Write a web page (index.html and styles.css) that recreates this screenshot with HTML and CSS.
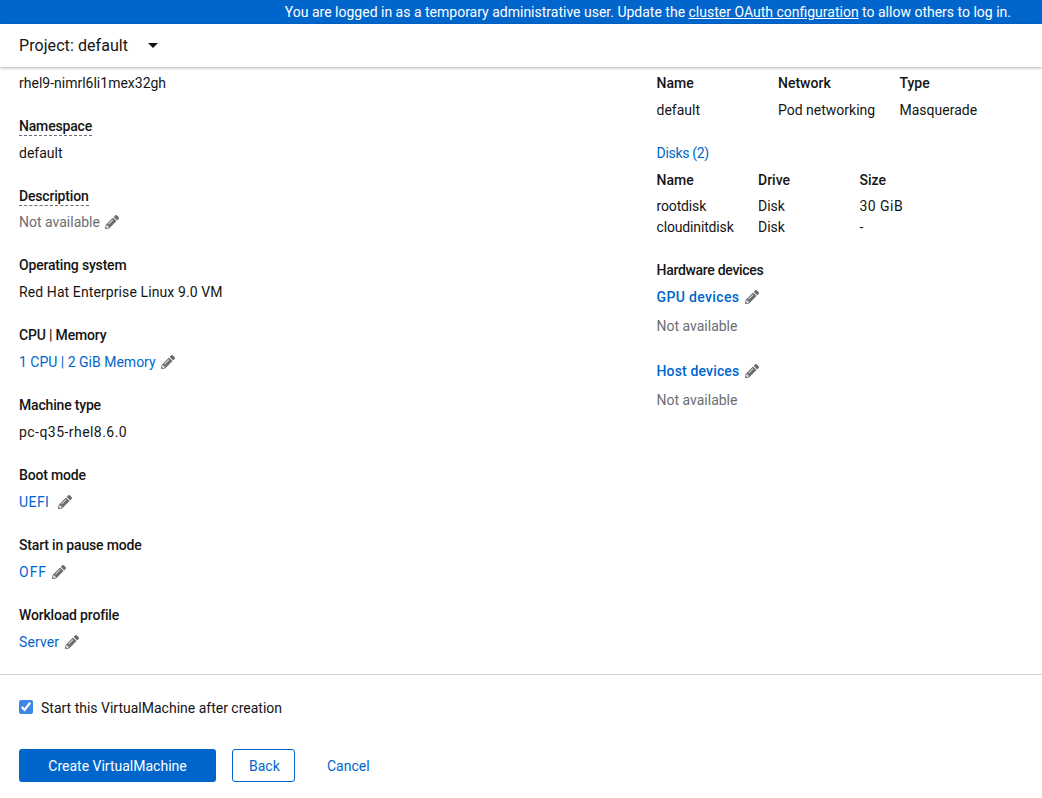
FILE: index.html
```html
<!DOCTYPE html>
<html lang="en">
<head>
<meta charset="utf-8">
<title>Create VirtualMachine</title>
<link rel="stylesheet" href="styles.css">
</head>
<body>
<svg class="defs" width="0" height="0"><defs><symbol id="pencil" viewBox="0 0 512 512"><path d="M497.9 142.1l-46.1 46.1c-4.7 4.7-12.3 4.7-17 0l-111-111c-4.7-4.7-4.7-12.3 0-17l46.1-46.1c18.7-18.7 49.1-18.7 67.9 0l60.1 60.1c18.8 18.7 18.8 49.1 0 67.9zM284.2 99.8L21.6 362.4.4 483.9c-2.9 16.4 11.4 30.6 27.8 27.8l121.5-21.3 262.6-262.6c4.7-4.7 4.7-12.3 0-17l-111-111c-4.8-4.7-12.4-4.7-17.1 0zM124.1 339.9c-5.5-5.5-5.5-14.3 0-19.8l154-154c5.5-5.5 14.3-5.5 19.8 0s5.5 14.3 0 19.8l-154 154c-5.5 5.5-14.3 5.5-19.8 0zM88 424h48v36.3l-64.5 11.3-31.1-31.1L51.7 376H88v48z"/></symbol></defs></svg>
<div class="page">
  <div class="banner">You are logged in as a temporary administrative user. Update the&nbsp;<a class="banner-link" href="#">cluster OAuth configuration</a>&nbsp;to allow others to log in.</div>
  <header class="project-bar">
    <span class="project-name">Project: default</span>
    <span class="caret"></span>
  </header>
  <main class="content">
    <dl class="col-left">
      <div class="item"><dd>rhel9-nimrl6li1mex32gh</dd></div>
      <div class="item"><dt><span class="dashed">Namespace</span></dt><dd>default</dd></div>
      <div class="item item-short"><dt><span class="dashed">Description</span></dt><dd class="muted">Not available <svg class="pencil"><use href="#pencil"/></svg></dd></div>
      <div class="item"><dt>Operating system</dt><dd class="loose">Red Hat Enterprise Linux 9.0 VM</dd></div>
      <div class="item"><dt>CPU | Memory</dt><dd><a href="#">1 CPU | 2 GiB Memory</a> <svg class="pencil"><use href="#pencil"/></svg></dd></div>
      <div class="item"><dt>Machine type</dt><dd class="looser">pc-q35-rhel8.6.0</dd></div>
      <div class="item"><dt>Boot mode</dt><dd><a class="looser" href="#">UEFI</a> <svg class="pencil pencil-wide"><use href="#pencil"/></svg></dd></div>
      <div class="item"><dt>Start in pause mode</dt><dd><a class="loosest" href="#">OFF</a> <svg class="pencil pencil-flush"><use href="#pencil"/></svg></dd></div>
      <div class="item"><dt>Workload profile</dt><dd><a class="loose" href="#">Server</a> <svg class="pencil"><use href="#pencil"/></svg></dd></div>
    </dl>
    <section class="col-right">
      <div class="grid grid-net">
        <b>Name</b><b>Network</b><b>Type</b>
      </div>
      <div class="grid grid-net grid-row">
        <span>default</span><span>Pod networking</span><span>Masquerade</span>
      </div>
      <a class="disks-link" href="#">Disks (2)</a>
      <div class="grid grid-disk">
        <b>Name</b><b>Drive</b><b>Size</b>
      </div>
      <div class="grid grid-disk grid-row-tight">
        <span class="tight">rootdisk</span><span>Disk</span><span class="looser">30 GiB</span>
        <span class="tight">cloudinitdisk</span><span>Disk</span><span>-</span>
      </div>
      <div class="hw-title">Hardware devices</div>
      <div class="hw-block">
        <a class="hw-link" href="#"><span class="hw-gpu">GPU devices</span> <svg class="pencil"><use href="#pencil"/></svg></a>
        <div class="muted hw-value">Not available</div>
      </div>
      <div class="hw-block">
        <a class="hw-link" href="#"><span class="hw-host">Host devices</span> <svg class="pencil"><use href="#pencil"/></svg></a>
        <div class="muted hw-value">Not available</div>
      </div>
    </section>
  </main>
  <footer class="footer">
    <label class="start-check"><input type="checkbox" checked><span>Start this VirtualMachine after creation</span></label>
    <div class="actions">
      <button class="btn btn-primary" type="button">Create VirtualMachine</button>
      <button class="btn btn-secondary" type="button">Back</button>
      <button class="btn btn-link" type="button">Cancel</button>
    </div>
  </footer>
</div>
</body>
</html>
```
FILE: styles.css
```css
* { box-sizing: border-box; }
html, body { margin: 0; height: 100%; }
body {
  font-family: Roboto, "Noto Sans", "Liberation Sans", sans-serif;
  font-size: 14px;
  line-height: 21px;
  color: #151515;
  background: #fff;
  overflow: hidden;
}
a { color: #06c; text-decoration: none; }
.defs { position: absolute; }
.page { height: 798px; display: flex; flex-direction: column; }
.tight { letter-spacing: -.15px; }
.loose { letter-spacing: .1px; }
.looser { letter-spacing: .45px; }
.loosest { letter-spacing: 1px; }

.banner {
  height: 24px;
  flex: none;
  background: #06c;
  color: #fff;
  display: flex;
  justify-content: flex-end;
  align-items: center;
  padding-right: 31px;
  white-space: nowrap;
}
.banner-link { color: #fff; text-decoration: underline; }

.project-bar {
  height: 43px;
  flex: none;
  display: flex;
  align-items: center;
  padding-left: 19px;
  background: #fff;
  box-shadow: 0 1px 3px rgba(3, 3, 3, .3);
  position: relative;
  z-index: 1;
}
.project-name { font-size: 16px; letter-spacing: .07px; }
.caret {
  margin-left: 20px;
  width: 0;
  height: 0;
  border-left: 5px solid transparent;
  border-right: 5px solid transparent;
  border-top: 5px solid #151515;
}

.content {
  height: 607px;
  flex: none;
  display: flex;
  padding: 6px 0 0 19px;
  overflow: hidden;
}
.col-left { margin: 0; width: 637.5px; flex: none; }
.item { margin-bottom: 22px; }
.item dt { font-weight: 500; margin-bottom: 6px; letter-spacing: -.18px; }
.item dd { margin: 0; }
.item-short dt { margin-bottom: 5px; }
.dashed { border-bottom: 1px dashed #6a6e73; padding-bottom: 1px; }
.muted { color: #6a6e73; }
.pencil { width: 14px; height: 14px; fill: #6a6e73; vertical-align: -2px; margin-left: 2px; }
.pencil-wide { margin-left: 5px; }
.pencil-flush { margin-left: 1px; }

.col-right { width: 370px; flex: none; display: flex; flex-direction: column; align-items: flex-start; }
.grid { display: grid; }
.grid b { font-weight: 500; }
.grid-net { grid-template-columns: 121.5px 121.5px 121.5px; }
.grid-disk { grid-template-columns: 101.5px 101.5px 101.5px; }
.grid-row { margin-top: 6px; }
.grid-row-tight { margin-top: 5px; }
.disks-link { margin-top: 22px; margin-bottom: 6px; letter-spacing: -.3px; }
.hw-title { font-weight: 500; margin-top: 22px; letter-spacing: -.3px; }
.hw-block { margin-top: 6px; margin-bottom: 18px; }
.hw-link { font-weight: 500; display: block; }
.hw-gpu { letter-spacing: .35px; }
.hw-host { letter-spacing: .15px; }
.hw-value { margin-top: 8px; }

.footer { flex: 1; border-top: 1px solid #d2d2d2; padding: 23px 0 0 19px; }
.start-check { display: flex; align-items: flex-start; gap: 8px; height: 21px; }
.start-check input { margin: 2px 0 0; width: 14px; height: 14px; accent-color: #3f87e6; }
.actions { display: flex; align-items: center; margin-top: 30px; }
.btn {
  height: 33px;
  font: inherit;
  border-radius: 3px;
  padding: 2px 16px 0;
  background: none;
  border: 1px solid transparent;
  color: #06c;
}
.btn-primary { width: 197px; background: #06c; color: #fff; }
.btn-secondary { width: 63px; margin-left: 16px; border-color: #06c; }
.btn-link { margin-left: 15px; }
```
